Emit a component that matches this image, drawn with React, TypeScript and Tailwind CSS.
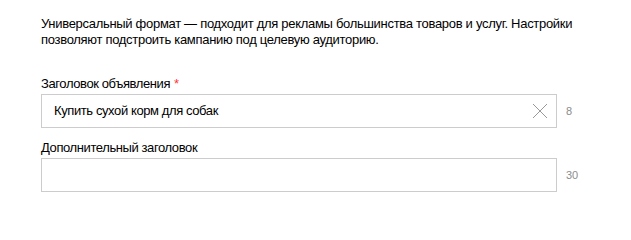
const font = { fontFamily: '"Liberation Sans", Arial, sans-serif' };

type FieldProps = {
  label: string;
  required?: boolean;
  value: string;
  counter: number;
};

const Field = ({ label, required, value, counter }: FieldProps) => (
  <div className="flex flex-col">
    <label className="text-[13px] leading-[16px] tracking-[-0.4px] text-black">
      {label}
      {required && <span className="ml-[4px] text-[#ff3333]">*</span>}
    </label>
    <div className="mt-[2px] flex items-center">
      <div className="flex h-[34px] w-[516px] items-center border border-[#cccccc] bg-white pl-[12px] pr-[8px]">
        <span className="flex-1 text-[13px] tracking-[-0.4px] text-black">{value}</span>
        {value && (
          <svg width="16" height="16" viewBox="0 0 16 16" className="shrink-0">
            <path d="M1 1L15 15M15 1L1 15" stroke="#999" strokeWidth="1" fill="none" />
          </svg>
        )}
      </div>
      <span className="ml-[9px] text-[11px] text-[#8c8c8c]">{counter}</span>
    </div>
  </div>
);

export default function App() {
  return (
    <div className="h-[201px] w-[631px] bg-white pl-[41px] pt-[16px]" style={font}>
      <p className="w-[550px] text-[13px] leading-[16px] tracking-[-0.3px] text-black">
        Универсальный формат — подходит для рекламы большинства товаров и услуг. Настройки позволяют подстроить кампанию под целевую аудиторию.
      </p>
      <div className="mt-[28px] flex flex-col gap-[12px]">
        <Field label="Заголовок объявления" required value="Купить сухой корм для собак" counter={8} />
        <Field label="Дополнительный заголовок" value="" counter={30} />
      </div>
    </div>
  );
}
